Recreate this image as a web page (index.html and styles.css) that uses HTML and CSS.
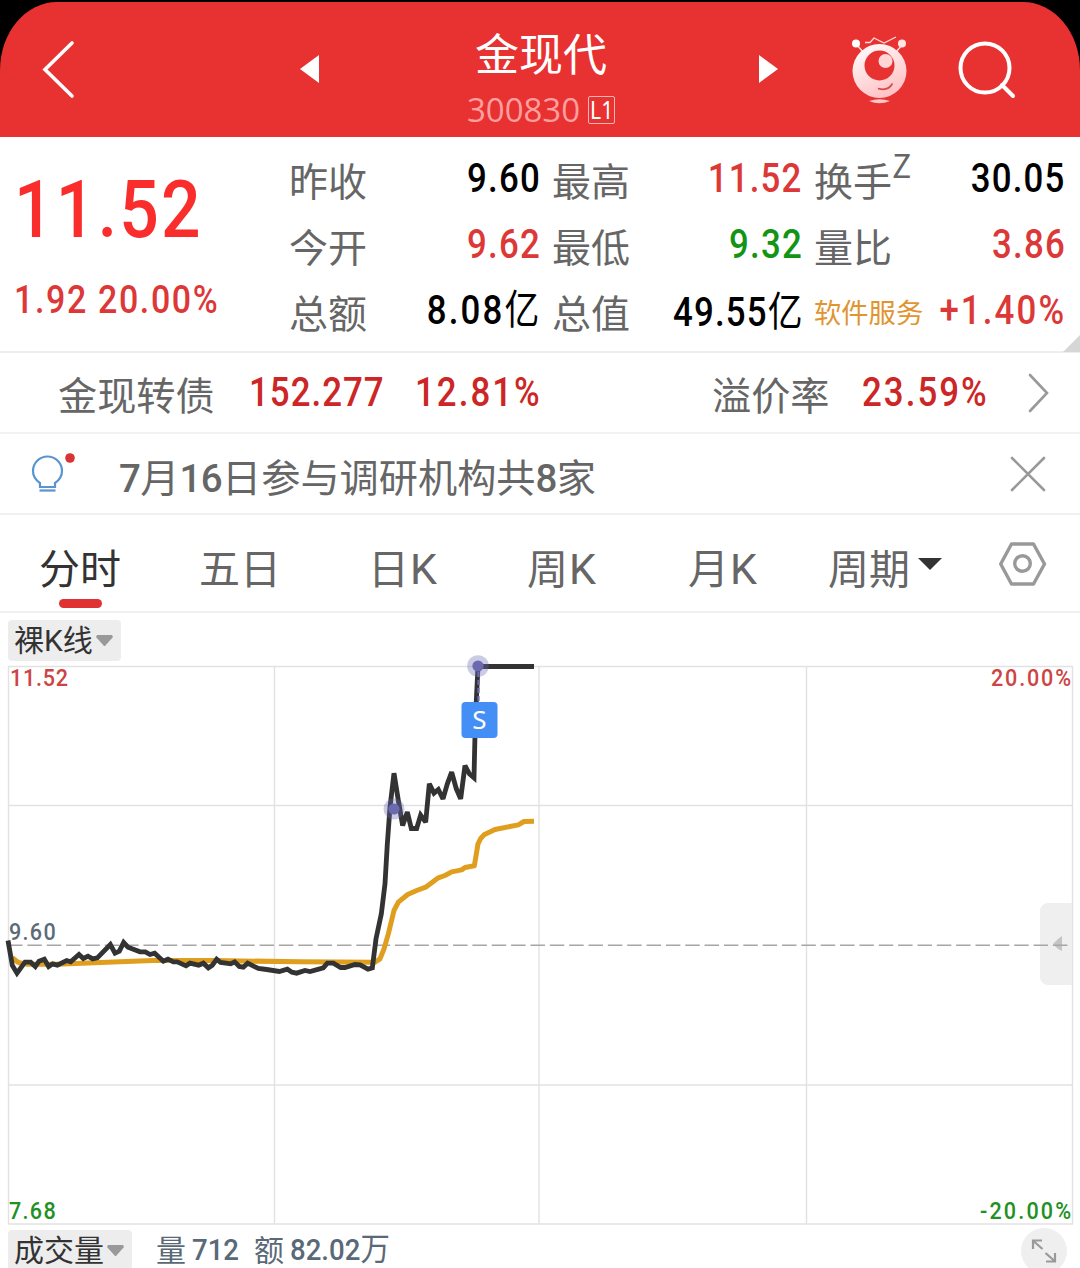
FILE: index.html
```html
<!DOCTYPE html>
<html lang="zh-CN">
<head>
<meta charset="utf-8">
<title>金现代 300830</title>
<link rel="stylesheet" href="styles.css">
</head>
<body>
<div class="frame">
<header class="topbar">
  <svg class="back" width="34" height="60" viewBox="0 0 34 60"><path d="M31 4 4 30.500 31 57" fill="none" stroke="#fff" stroke-width="3.600" stroke-linecap="round" stroke-linejoin="miter"/></svg>
  <svg class="prev" width="20" height="28" viewBox="0 0 20 28"><path d="M19 0V28L0 14Z" fill="#fff"/></svg>
  <div class="title">
    <h1>金现代</h1>
    <div class="code"><span>300830</span><span class="level"><span>L1</span></span></div>
  </div>
  <svg class="next" width="20" height="28" viewBox="0 0 20 28"><path d="M0 0V28L19 14Z" fill="#fff"/></svg>
  <svg class="robot" width="58" height="70" viewBox="0 0 58 70">
    <defs><linearGradient id="skin" x1="0" y1="0" x2=".5" y2="1"><stop offset="0" stop-color="#fff"/><stop offset="1" stop-color="#ffc4c6"/></linearGradient></defs>
    <g fill="none" stroke="#ffd8d8" stroke-width="1.600"><path d="M6 11l6 7M51 11l-6 7"/><path d="M14 8.500h5l4-4.500 10 5L45 3" stroke-width="1.300"/></g>
    <circle cx="5" cy="9.500" r="4" fill="#fff"/><circle cx="51" cy="9.500" r="4" fill="#ffe4e4"/>
    <circle cx="28.500" cy="37" r="27" fill="url(#skin)"/>
    <circle cx="28.500" cy="31.500" r="15" fill="#e83131"/>
    <circle cx="34.500" cy="27" r="7" fill="#ffd5d6"/>
    <path d="M27 54.500q10 3 14.500-5" fill="none" stroke="#d8484a" stroke-width="1.600"/>
    <path d="M18 67q10.500-3.500 21 0q-10.500 4.500-21 0Z" fill="#ffc6c8"/>
  </svg>
  <svg class="search" width="60" height="60" viewBox="0 0 60 60" fill="none" stroke="#fff" stroke-width="4"><circle cx="27" cy="28" r="24.500"/><path d="M44 45 55 56" stroke-linecap="round"/></svg>
</header>

<main>
<section class="quote">
  <div class="last">
    <div class="price num">11.52</div>
    <div class="change num">1.92 20.00%</div>
  </div>
  <dl class="stats">
    <div><dt>昨收</dt><dd class="num">9.60</dd></div>
    <div><dt>最高</dt><dd class="num up">11.52</dd></div>
    <div><dt>换手<sup>Z</sup></dt><dd class="num">30.05</dd></div>
    <div><dt>今开</dt><dd class="num up">9.62</dd></div>
    <div><dt>最低</dt><dd class="num down">9.32</dd></div>
    <div><dt>量比</dt><dd class="num up">3.86</dd></div>
    <div><dt>总额</dt><dd class="num amount">8.08<i>亿</i></dd></div>
    <div><dt>总值</dt><dd class="num cap">49.55<i>亿</i></dd></div>
    <div><dt class="sector">软件服务</dt><dd class="num up pct">+1.40%</dd></div>
  </dl>
  <svg class="corner" width="17" height="17" viewBox="0 0 17 17"><path d="M17 0V17H0Z" fill="#d6d6d6"/></svg>
</section>

<section class="bond">
  <span class="name">金现转债</span><span class="num b-price">152.277</span><span class="num b-pct">12.81%</span>
  <span class="premium">溢价率</span><span class="num b-rate">23.59%</span>
  <svg width="24" height="42" viewBox="0 0 24 42"><path d="M4 3 21 21 4 39" fill="none" stroke="#999" stroke-width="2.600" stroke-linecap="round"/></svg>
</section>

<section class="notice">
  <svg class="bulb" width="46" height="46" viewBox="0 0 46 46"><g fill="none" stroke="#5a93d2" stroke-width="2.200"><path d="M9 36V32C4.500 29 2 25 2 20A14.500 14.500 0 0 1 31 20C31 25 28.500 29 24 32V36Z"/><path d="M8.500 39.500H24.500"/></g><circle cx="39" cy="7" r="4.800" fill="#d93434"/></svg>
  <p><b>7</b>月<b>16</b>日参与调研机构共<b>8</b>家</p>
  <svg class="close" width="38" height="38" viewBox="0 0 38 38"><path d="M3 3 35 35M35 3 3 35" stroke="#999" stroke-width="2.600" stroke-linecap="round"/></svg>
</section>

<nav class="tabs">
  <a class="active">分时</a><a>五日</a><a>日<span>K</span></a><a>周<span>K</span></a><a>月<span>K</span></a>
  <a class="period">周期<svg width="24" height="12" viewBox="0 0 24 12"><path d="M0 0H24L12 12Z" fill="#333"/></svg></a>
  <svg class="gear" width="48" height="46" viewBox="0 0 48 46" fill="none" stroke="#999" stroke-width="3.400" stroke-linejoin="round"><path d="M12.500 3H34.500L45.500 23 34.500 43H12.500L1.700 23Z"/><circle cx="23.500" cy="22.500" r="7.800"/></svg>
</nav>

<div class="picker"><button>裸K线<svg width="17" height="11" viewBox="0 0 17 11"><path d="M1 0H16L17 2 9 11H8L0 2Z" fill="#999"/></svg></button></div>

<svg class="chart" width="1080" height="569" viewBox="0 661 1080 569">
  <g fill="none" stroke="#e2e2e2" stroke-width="1.400"><path d="M8.500 666.500H1072.500V1224H8.500ZM274.500 666.500V1224M539 666.500V1224M806.500 666.500V1224M8.500 805.500H1072.500M8.500 1085H1072.500"/></g>
  <path d="M1072 903H1048a8 8 0 0 0-8 8V977a8 8 0 0 0 8 8H1072Z" fill="#efefef"/>
  <path d="M1062 936V951L1058 949 1053 944 1058 939Z" fill="#c4c4c4"/>
  <path d="M8 945.300H1072" stroke="#a6a6a6" stroke-width="1.400" stroke-dasharray="14.500 4.850"/>
  <g class="axis">
    <text transform="translate(10 686) scale(.88 1)" textLength="66" class="up">11.52</text>
    <text transform="translate(991 686) scale(.88 1)" textLength="91" class="up">20.00%</text>
    <text transform="translate(9 940) scale(.88 1)" textLength="53" class="mid">9.60</text>
    <text transform="translate(9 1219) scale(.88 1)" textLength="53" class="down">7.68</text>
    <text transform="translate(980 1219) scale(.88 1)" textLength="103.500" class="down">-20.00%</text>
  </g>
  <g transform="translate(0 900.500) scale(.33333)" fill="none">
    <polyline stroke="#e09e1e" stroke-width="15" stroke-linejoin="round" points="37,172 55,186 80,191 170,191 320,185 460,180 640,180 900,184 1125,185 1140,175 1152,145 1165,100 1182,30 1195,5 1223,-18 1250,-30 1277,-40 1315,-68 1335,-75 1355,-86 1385,-92 1395,-99 1423,-104 1434,-170 1442,-186 1452,-197 1485,-213 1555,-227 1572,-237 1602,-238"/>
    <polyline stroke="#333" stroke-width="14.500" stroke-linejoin="miter" stroke-miterlimit="2.500" points="24,120 37,195 51,218 75,185 92,185 106,198 117,182 133,176 146,198 158,190 172,194 200,180 212,184 237,162 250,174 264,167 278,175 292,172 331,132 345,158 358,152 371,126 384,140 420,154 436,154 450,162 464,158 490,182 504,176 520,184 532,184 558,196 570,188 596,194 610,188 625,202 637,194 650,176 662,186 692,190 704,184 718,198 730,200 743,188 775,204 800,207 838,213 862,206 876,215 890,218 915,210 930,213 970,202 982,188 1000,188 1022,201 1035,201 1065,192 1080,193 1104,206 1117,202 1128,115 1144,40 1155,-50 1162,-170 1170,-280 1182,-382 1195,-300 1208,-225 1222,-265 1234,-216 1250,-216 1262,-256 1277,-235 1288,-350 1302,-322 1315,-333 1329,-305 1342,-350 1355,-385 1369,-335 1382,-305 1395,-405 1408,-380 1422,-368 1426,-540 1434,-702 1602,-702"/>
  </g>
  <path d="M478.500 672V702" stroke="#6b6ab0" stroke-width="2.200" stroke-dasharray="5 3"/>
  <g fill="#6b6ab0"><circle cx="394" cy="809" r="10.500" opacity=".35"/><circle cx="394" cy="809" r="5.600"/><circle cx="478" cy="666" r="10.800" opacity=".35"/><circle cx="478" cy="666" r="5.600"/></g>
  <rect x="461.500" y="702" width="36" height="36" rx="4" fill="#448ff5"/>
  <text class="sell" x="479.500" y="729" text-anchor="middle">S</text>
</svg>

<footer class="volume">
  <button>成交量<svg width="17" height="11" viewBox="0 0 17 11"><path d="M1 0H16L17 2 9 11H8L0 2Z" fill="#999"/></svg></button>
  <span class="vol">量</span><b class="v1">712</b><span class="amt">额</span><b class="v2">82.02<i>万</i></b>
  <svg class="expand" width="46" height="46" viewBox="0 0 46 46"><circle cx="23" cy="23" r="23" fill="#efefef"/><path d="M12 21V12.500H21M13 13.500 21.500 21M34 25V33.500H25M33 32.500 24.500 25" fill="none" stroke="#999" stroke-width="2.200"/></svg>
</footer>
</main>
</div>
</body>
</html>
```
FILE: styles.css
```css
* { box-sizing: border-box; margin: 0; padding: 0; }
body { width: 1080px; height: 1268px; overflow: hidden; background: #fff; color: #666; font-family: "Noto Sans CJK SC", sans-serif; }
svg { display: block; flex: none; }
i { font-style: normal; font-weight: 400; font-family: "Noto Sans CJK SC", sans-serif; line-height: 0; letter-spacing: 0; }

.frame { width: 1080px; height: 1268px; background: linear-gradient(#000 0 100px, #fff 100px); padding-top: 2px; }
.topbar { height: 135px; display: flex; align-items: flex-start; background: #e83131; border-radius: 57px 57px 0 0 / 68px 68px 0 0; color: #fff; }
.back { margin: 37px 0 0 41px; }
.prev { margin: 53px 0 0 225px; }
.title { width: 300px; margin-left: 71px; display: flex; flex-direction: column; align-items: center; }
.title h1 { font-size: 44px; line-height: 60px; font-weight: 400; margin-top: 20px; }
.code { display: flex; align-items: center; gap: 8px; height: 40px; margin-top: 8px; font: 400 33px/40px "Open Sans", sans-serif; color: #ff9f9f; }
.level { width: 27px; height: 28px; border: 1.500px solid #f5b5b5; border-radius: 2px; font: 400 25px/25px "Noto Sans", sans-serif; color: #fff; display: flex; justify-content: center; }
.level span { transform: scaleX(.85); }
.next { margin: 53px 0 0 68px; }
.robot { margin: 32px 0 0 72px; }
.search { margin: 38px 0 0 49px; }

main { background: #fff; }
.num { font-family: Roboto, "Noto Sans CJK SC", sans-serif; font-weight: 500; color: #000; white-space: nowrap; }
.num.up { color: #dc3838; }
.num.down { color: #149414; }
.quote { height: 216px; display: flex; border-bottom: 2px solid #eee; position: relative; }
.last { width: 289px; flex: none; }
.price { font-size: 80px; line-height: 94px; margin: 26px 0 0 14px; color: #fa2d2d; letter-spacing: 2.600px; transform: scaleX(.87); transform-origin: left; }
.change { font-size: 39px; line-height: 46px; margin: 20px 0 0 14px; color: #dc3838; letter-spacing: 1.900px; transform: scaleX(.87); transform-origin: left; }
.stats { width: 775px; padding-top: 8px; display: grid; grid-template-columns: 250px 249px 250px; grid-auto-rows: 66px; column-gap: 13px; }
.stats div { display: flex; justify-content: space-between; align-items: flex-start; }
.stats dt { font-size: 39px; line-height: 68px; white-space: nowrap; }
.stats sup { font-size: 32px; line-height: 0; vertical-align: 18px; }
.stats dd { font-size: 41px; line-height: 66px; height: 66px; margin-right: -2px; letter-spacing: 1.400px; transform: scaleX(.85); transform-origin: right; }
.stats dd i { font-size: 41px; }
.stats .amount { margin-right: 0; letter-spacing: 2.500px; }
.stats .cap { line-height: 70px; margin-right: -2px; }
.stats .pct { margin-left: -20px; letter-spacing: 2.500px; }
.stats .sector { font-size: 27.300px; color: #e09530; width: 110px; }
.corner { position: absolute; right: 0; bottom: -1px; }

.bond { height: 81px; display: flex; align-items: center; border-bottom: 2px solid #f2f2f2; font-size: 39.200px; padding-left: 58px; white-space: nowrap; }
.bond .num { font-size: 41px; color: #cc2626; letter-spacing: 2.400px; transform: scaleX(.85); transform-origin: left; line-height: 79px; height: 80px; }
.bond .name { width: 191px; }
.bond .b-price { width: 166px; letter-spacing: 1.200px; }
.b-pct { width: 297px; }
.premium { width: 150px; }
.b-rate { width: 164px; }

.notice { height: 81px; display: flex; align-items: center; border-bottom: 2px solid #f0f0f0; padding-left: 31px; }
.notice p { width: 887px; margin-left: 42px; font-size: 39.200px; line-height: 78px; padding-top: 7px; }
.notice b { font-family: Roboto, sans-serif; font-weight: 500; font-size: 38.500px; letter-spacing: -.6px; }
.close { margin-left: 3px; }

.tabs { height: 98px; display: flex; border-bottom: 2px solid #f0f0f0; padding-left: 39px; font-size: 41px; }
.tabs a { line-height: 102px; width: 160px; flex: none; position: relative; white-space: nowrap; }
.tabs a span { font: 400 43px/1 Roboto, sans-serif; margin-left: 1px; }
.tabs a:nth-child(2) { width: 169px; }
.tabs a:nth-child(3) { width: 159px; }
.tabs a:nth-child(4) { width: 161px; }
.tabs a:nth-child(5) { width: 140px; }
.tabs .period { width: 171px; display: flex; gap: 8px; }
.period svg { margin-top: 43px; }
.tabs .active { color: #333; }
.active::after { content: ""; position: absolute; left: 20px; bottom: 3px; width: 43px; height: 9px; border-radius: 5px; background: #e03232; }
.gear { margin-top: 26px; }

button { border: 0; background: #ededed; border-radius: 4px; height: 41px; padding-left: 6px; display: flex; align-items: center; gap: 3px; font: 400 30px/38px Roboto, "Noto Sans CJK SC", sans-serif; color: #333; white-space: nowrap; }
.picker { height: 48px; padding: 7px 0 0 8px; }
.picker button { width: 113px; }
.chart { width: 1080px; height: 569px; overflow: visible; }
.axis { font: 500 24.500px Roboto, sans-serif; }
.axis .up { fill: #cc4444; }
.axis .mid { fill: #5b6b7a; }
.axis .down { fill: #229022; }
.sell { font: 400 26px "Noto Sans", sans-serif; fill: #fff; }

.volume { height: 38px; display: flex; align-items: flex-start; padding-left: 8px; color: #596977; font-size: 30px; line-height: 37px; }
.volume button { width: 124px; }
.volume b { font: 500 30px/39px Roboto, "Noto Sans CJK SC", sans-serif; transform: scaleX(.92); transform-origin: left; white-space: nowrap; }
.volume i { font-size: 32px; }
.vol { width: 36px; margin-left: 24px; }
.v1 { width: 62px; }
.amt { width: 36px; }
.v2 { width: 731px; }
.expand { margin-top: -2px; }
```
